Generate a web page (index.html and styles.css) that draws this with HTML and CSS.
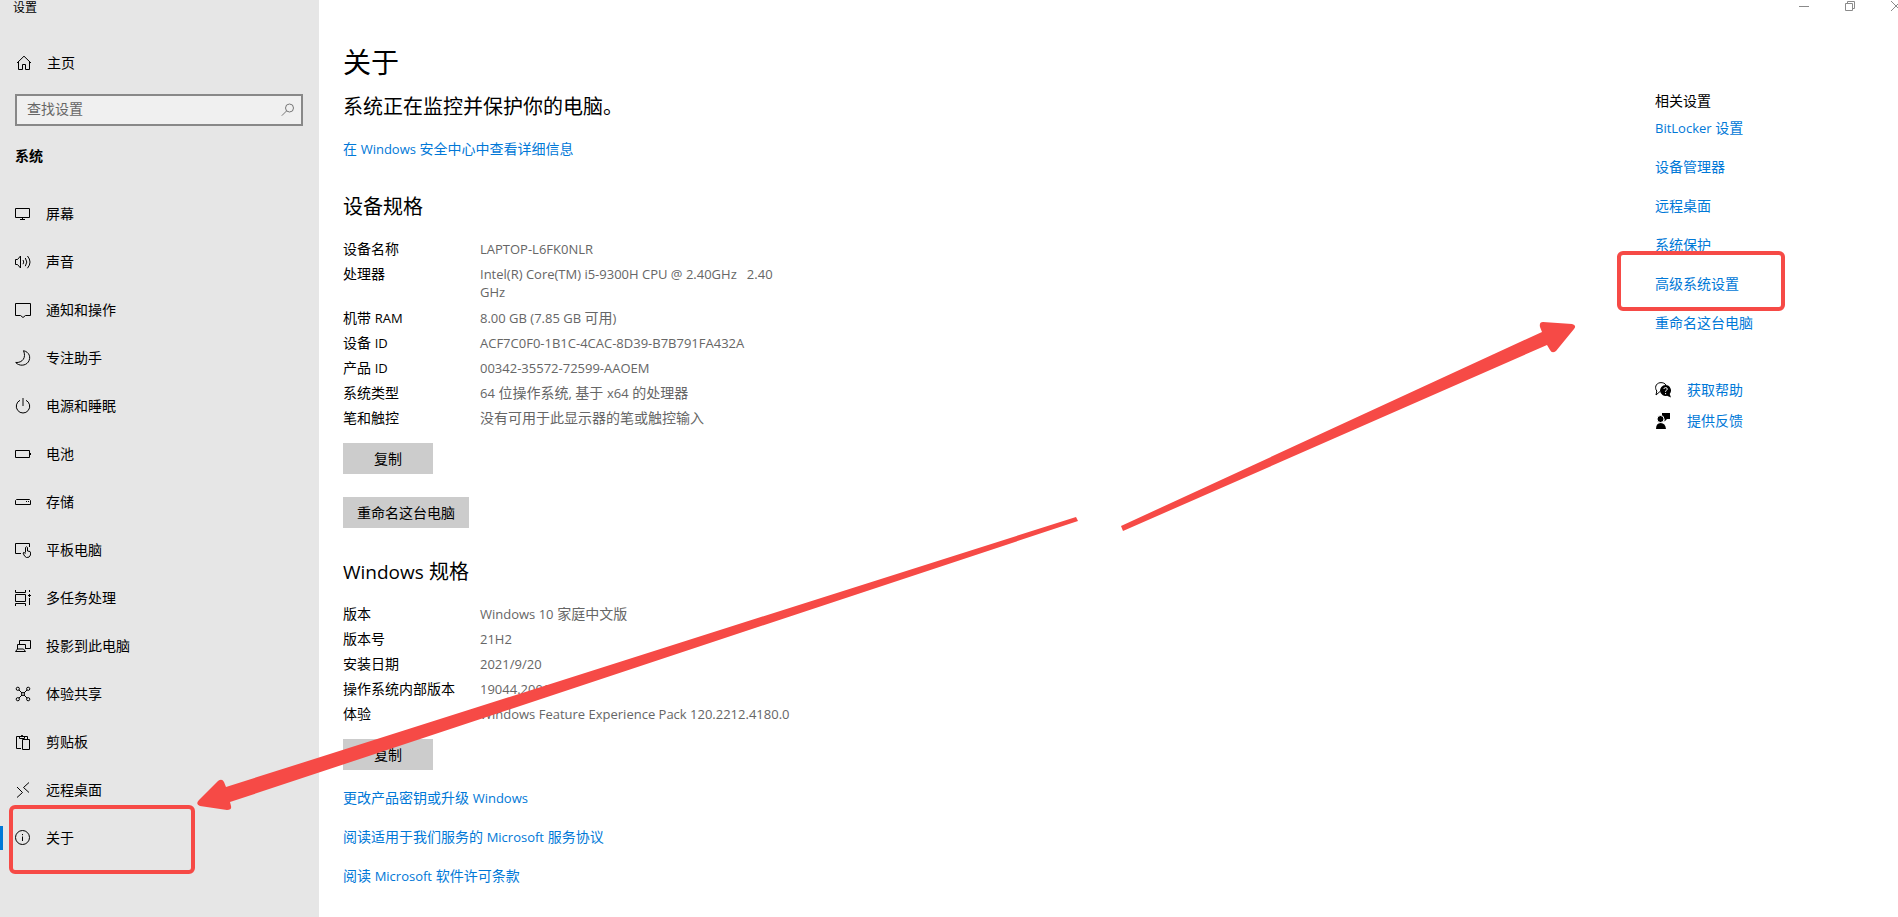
FILE: index.html
```html
<!DOCTYPE html>
<html lang="zh-CN">
<head>
<meta charset="utf-8">
<title>设置</title>
<link rel="stylesheet" href="styles.css">
</head>
<body>
<div class="app">
  <aside class="sidebar">
    <div class="window-title">设置</div>
    <a class="home" href="#home">
      <svg class="icon" viewBox="0 0 16 16"><path d="M1 8 8 1.200l7 6.800M2.500 6.800v7.700h4v-5h3v5h4V6.800"/></svg>
      <span>主页</span>
    </a>
    <form class="search">
      <input type="text" aria-label="查找设置" placeholder="查找设置">
      <svg class="search-icon" viewBox="0 0 14 14"><circle cx="8.500" cy="5" r="4"/><path d="M5.600 7.900.800 12.700"/></svg>
    </form>
    <h2 class="group">系统</h2>
    <nav class="nav">
      <a href="#display"><svg class="icon" viewBox="0 0 16 16"><path d="M.500 2.500h14v9H.500zM7.500 11.500v2M5 13.500h5"/></svg>屏幕</a>
      <a href="#sound"><svg class="icon" viewBox="0 0 16 16"><path d="M.500 5.500h2l3-3.500v12l-3-3.500h-2zM8 6q1.500 2 0 4.200M10.300 4q3 4 0 8.200M12.500 2q5 6 0 12.200"/></svg>声音</a>
      <a href="#notifications"><svg class="icon" viewBox="0 0 16 16"><path d="M.500 1.500h15v12h-5L8 15.500l-2.500-2H.500z"/></svg>通知和操作</a>
      <a href="#focus"><svg class="icon" viewBox="0 0 16 16"><path d="M8.500.700C14.500 2 16.200 7.500 13.300 12 10.500 16 4 16.300.700 12.500 7.500 13 11.500 7.500 8.500.700z"/></svg>专注助手</a>
      <a href="#power"><svg class="icon" viewBox="0 0 16 16"><path d="M5 2.300a6.700 6.700 0 1 0 6 0"/><path class="soft" d="M8 0v8"/></svg>电源和睡眠</a>
      <a href="#battery"><svg class="icon" viewBox="0 0 16 16"><path d="M.500 4.500h14v7H.500zM15.500 7v2"/></svg>电池</a>
      <a href="#storage"><svg class="icon" viewBox="0 0 16 16"><path d="M1.500 5.500h13l1 1v4H.500v-4zM11 7.500h1M13 7.500h1"/></svg>存储</a>
      <a href="#tablet"><svg class="icon" viewBox="0 0 16 16"><path d="M6 11.500H.500v-10h14V5M10.500 10.500v-5q1-1.500 2 0v3.500l2.500.500q1 1 .500 3.500-1 3-4 2.500-2-.500-3.500-4.500.500-1.500 2.500.500"/></svg>平板电脑</a>
      <a href="#multitask"><svg class="icon" viewBox="0 0 16 16"><path d="M.500 0v2.500h10V0M.500 4.500h10v7H.500zM.500 16v-2.500h10V16M14.500 0v2M14.500 8v7M14.500 4v3M13 5.500h3"/></svg>多任务处理</a>
      <a href="#project"><svg class="icon" viewBox="0 0 16 16"><path d="M4.500 6V2.500h11v8h-5M2.500 11V6.500h8V11M.500 13.500l2-2.500h6l2 2.500z"/></svg>投影到此电脑</a>
      <a href="#shared"><svg class="icon" viewBox="0 0 16 16"><circle cx="2.800" cy="2.800" r="1.600"/><circle cx="13.200" cy="2.800" r="1.600"/><circle cx="2.800" cy="13.200" r="1.600"/><circle cx="13.200" cy="13.200" r="1.600"/><circle cx="8" cy="8" r="1.500"/><path d="m4 4 3 3M12 4 9 7M4 12l3-3M12 12 9 9"/></svg>体验共享</a>
      <a href="#clipboard"><svg class="icon" viewBox="0 0 16 16"><path d="M6 14.500H1.500v-12h11V5M4.500 4.500v-2h1.500q1-3 2 0h1.500v2zM7.500 5.500h7v10h-7z"/></svg>剪贴板</a>
      <a href="#remote"><svg class="icon" viewBox="0 0 16 16"><path d="m2 5 5.500 5.500L2 15.500M14 .500 8.500 5.500l5.500 5"/></svg>远程桌面</a>
      <a class="current" href="#about" aria-current="page"><svg class="icon" viewBox="0 0 16 16"><circle cx="7.500" cy="7.500" r="7"/><path d="M7.500 6.500V11M7.500 4v1.200"/></svg>关于</a>
    </nav>
  </aside>

  <div class="page">
    <header class="titlebar">
      <button type="button" aria-label="最小化"><svg viewBox="0 0 10 10"><path d="M0 5.500h10"/></svg></button>
      <button type="button" aria-label="还原"><svg viewBox="0 0 10 10"><path d="M.500 2.500h7v7h-7zM2.500 2V.500h7v7H8"/></svg></button>
      <button type="button" class="close" aria-label="关闭"><svg viewBox="0 0 10 10"><path d="m0 0 10 10M10 0 0 10"/></svg></button>
    </header>
    <div class="columns">
      <main class="about">
        <h1>关于</h1>
        <p class="status">系统正在监控并保护你的电脑。</p>
        <a class="security" href="#security">在 <span class="latin">Windows</span> 安全中心中查看详细信息</a>

        <section class="specs">
          <h2>设备规格</h2>
          <dl>
            <dt>设备名称</dt><dd><span class="latin">LAPTOP-L6FK0NLR</span></dd>
            <dt>处理器</dt><dd class="wrap"><span class="latin">Intel(R) Core(TM) i5-9300H CPU @ 2.40GHz &nbsp; 2.40 GHz</span></dd>
            <dt>机带 <span class="latin">RAM</span></dt><dd><span class="latin">8.00 GB (7.85 GB </span>可用<span class="latin">)</span></dd>
            <dt>设备 <span class="latin">ID</span></dt><dd><span class="latin">ACF7C0F0-1B1C-4CAC-8D39-B7B791FA432A</span></dd>
            <dt>产品 <span class="latin">ID</span></dt><dd><span class="latin">00342-35572-72599-AAOEM</span></dd>
            <dt>系统类型</dt><dd><span class="latin">64</span> 位操作系统<span class="latin">, </span>基于 <span class="latin">x64</span> 的处理器</dd>
            <dt>笔和触控</dt><dd>没有可用于此显示器的笔或触控输入</dd>
          </dl>
          <button type="button" class="btn">复制</button>
          <button type="button" class="btn rename">重命名这台电脑</button>
        </section>

        <section class="specs">
          <h2><span class="latin-large">Windows</span> 规格</h2>
          <dl>
            <dt>版本</dt><dd><span class="latin">Windows 10</span> 家庭中文版</dd>
            <dt>版本号</dt><dd><span class="latin">21H2</span></dd>
            <dt>安装日期</dt><dd><span class="latin">2021/9/20</span></dd>
            <dt>操作系统内部版本</dt><dd><span class="latin">19044.2006</span></dd>
            <dt>体验</dt><dd><span class="latin">Windows Feature Experience Pack 120.2212.4180.0</span></dd>
          </dl>
          <button type="button" class="btn">复制</button>
        </section>

        <div class="links">
          <a href="#key">更改产品密钥或升级 <span class="latin">Windows</span></a>
          <a href="#services">阅读适用于我们服务的 <span class="latin">Microsoft</span> 服务协议</a>
          <a href="#license">阅读 <span class="latin">Microsoft</span> 软件许可条款</a>
        </div>
      </main>

      <aside class="related">
        <h3>相关设置</h3>
        <div class="links">
          <a href="#bitlocker"><span class="latin">BitLocker</span> 设置</a>
          <a href="#devices">设备管理器</a>
          <a href="#remote-desktop">远程桌面</a>
          <a href="#protection">系统保护</a>
          <a class="marked" href="#advanced">高级系统设置</a>
          <a href="#rename">重命名这台电脑</a>
        </div>
        <div class="support">
          <a href="#help"><svg viewBox="0 0 16 16"><path class="line" d="M5 9.500 1 13l.800-4C-.500 6 .500 1.500 5 .700 8 .300 10 1.500 11 3"/><path d="M10.500 3a5.500 5.500 0 1 0 1.500 10.800l4 1.700-1.300-3.500A5.500 5.500 0 0 0 10.500 3z"/><path class="cut" d="M8.800 7q.300-1.500 2-1.400 1.700.200 1.500 1.600-.200.900-1.700 1.700v.900M10.600 11v1.200"/></svg>获取帮助</a>
          <a href="#feedback"><svg viewBox="0 0 16 16"><path d="M7 0h8v6h-3L9.500 8.500V6H7z"/><circle class="head" cx="5.500" cy="6" r="3.500"/><path d="M1 16q0-6 4.700-6t5.300 6z"/></svg>提供反馈</a>
        </div>
      </aside>
    </div>
  </div>

  <svg class="arrows" width="1898" height="917" viewBox="0 0 1898 917" aria-hidden="true">
    <path d="M1076 517 226 787l-2-5q-2-4-6-1l-19 19q-4 4 1 6l27 4q5 0 4-4l-1-4L1078 521z"/>
    <path d="m1121 526 421-194-2-5q-1-5 3-5l29 2q5 1 2 5l-18 22q-4 3-6-1l-3-5-424 186z"/>
  </svg>
</div>
</body>
</html>
```
FILE: styles.css
```css
*, *::before, *::after { box-sizing: border-box; }

body {
  margin: 0;
  overflow: hidden;
  background: #fff;
  color: #000;
  font: 14px/20px "Open Sans", "Noto Sans CJK SC", sans-serif;
}

a { color: #0078d7; text-decoration: none; }
h1, h2, h3, p, dl, dd { margin: 0; font-weight: 400; }
button { border: 0; padding: 0; font: inherit; color: inherit; }

.latin { font-size: 13px; }
.latin-large { font-size: 19px; }

.app { position: relative; display: flex; min-height: 100vh; overflow: hidden; }

.sidebar {
  flex: none;
  width: 319px;
  background: #e6e6e6;
}
.sidebar a { color: #000; }
.window-title { height: 45px; padding-left: 13px; font-size: 12px; line-height: 16px; }
.home { display: flex; align-items: center; gap: 15px; height: 36px; padding-left: 16px; }

.icon {
  flex: none;
  width: 16px;
  height: 16px;
  fill: none;
  stroke: #000;
  stroke-width: 1;
}
.icon .soft { stroke: #777; stroke-width: 2; }

.search { position: relative; margin: 13px 16px 0 15px; }
.search input {
  display: block;
  width: 100%;
  height: 32px;
  padding: 0 32px 4px 10px;
  border: 2px solid #888;
  border-radius: 0;
  outline: 0;
  background: #f0f0f0;
  font: inherit;
}
.search input::placeholder { color: #666; opacity: 1; }
.search-icon {
  position: absolute;
  top: 9px;
  right: 8px;
  width: 14px;
  height: 14px;
  fill: none;
  stroke: #777;
}
.group { padding: 20px 15px; font-size: 14px; line-height: 20px; font-weight: 700; }

.nav { margin-top: 4px; }
.nav a {
  position: relative;
  display: flex;
  align-items: center;
  gap: 15px;
  height: 48px;
  padding-left: 15px;
}
.nav .current::before {
  content: "";
  position: absolute;
  left: 0;
  top: 12px;
  width: 3px;
  height: 24px;
  background: #0078d7;
}
.nav .current::after {
  content: "";
  position: absolute;
  left: 9px;
  top: -9px;
  width: 186px;
  height: 69px;
  border: 4px solid #f64a46;
  border-radius: 6px;
}

.page { flex: 1; min-width: 0; }
.titlebar { display: flex; justify-content: flex-end; height: 12px; }
.titlebar button {
  display: flex;
  justify-content: center;
  align-items: center;
  width: 46px;
  background: none;
}
.titlebar .close { justify-content: flex-start; width: 25px; padding-left: 18px; overflow: hidden; }
.titlebar svg { flex: none; width: 10px; height: 10px; fill: none; stroke: #8a8a8a; }

.columns { display: flex; justify-content: space-between; padding-left: 24px; }
.about { width: 448px; padding-top: 30px; }
.about h1 { font-size: 28px; line-height: 40px; }
.status { padding: 11px 0 18px; font-size: 20px; line-height: 28px; }
.security { display: block; padding-bottom: 34px; }

.specs h2 { font-size: 20px; line-height: 28px; }
.specs dl {
  display: grid;
  grid-template-columns: 137px 1fr;
  row-gap: 5px;
  padding: 18px 0 15px;
}
.specs dt { height: 20px; }
.specs dd { color: #666; white-space: nowrap; }
.specs dd.wrap { padding: 1px 0 0; line-height: 18px; white-space: normal; height: 39px; }
.btn { display: block; width: 90px; height: 31px; background: #ccc; }
.rename { width: 126px; margin: 23px 0 30px; }

.links { display: flex; flex-direction: column; align-items: flex-start; gap: 19px; }
.about > .links { padding-top: 18px; }

.related { width: 243px; padding-top: 79px; }
.related h3 { font-size: 14px; line-height: 20px; padding-bottom: 7px; }
.marked { position: relative; }
.marked::after {
  content: "";
  position: absolute;
  left: -38px;
  top: -23px;
  width: 168px;
  height: 60px;
  border: 4px solid #f64a46;
  border-radius: 6px;
}
.support { display: flex; flex-direction: column; gap: 11px; padding-top: 47px; }
.support a { display: flex; align-items: center; gap: 16px; }
.support svg { width: 16px; height: 16px; }
.support .line { fill: none; stroke: #000; }
.support .cut { fill: none; stroke: #fff; }
.support .head { stroke: #fff; }

.arrows { position: absolute; left: 0; top: 0; fill: #f64a46; pointer-events: none; }
```
